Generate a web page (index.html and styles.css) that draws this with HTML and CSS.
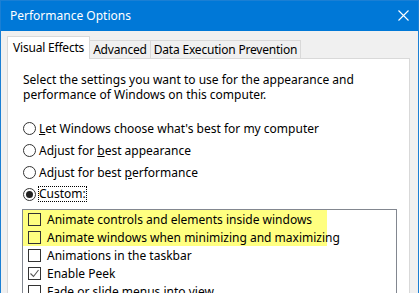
FILE: index.html
```html
<!DOCTYPE html>
<html lang="en">
<head>
    <meta charset="UTF-8">
    <title>Performance Options</title>
    <link rel="stylesheet" href="styles.css">
</head>
<body>

<section class="window">
    <div class="titlebar">
        <span class="title">Performance Options</span>
        <button class="close-btn" aria-label="Close">
            <svg width="11" height="11" viewBox="0 0 11 11">
                <path d="M0.5 0.5 L10.5 10.5 M10.5 0.5 L0.5 10.5" stroke="#fff" stroke-width="1.1" fill="none"/>
            </svg>
        </button>
    </div>

    <div class="dialog-body">
        <!-- Tabs -->
        <div class="tabs">
            <div class="tab active">Visual Effects</div>
            <div class="tab">Advanced</div>
            <div class="tab">Data Execution Prevention</div>
        </div>

        <div class="panel">
            <p class="intro">Select the settings you want to use for the appearance and performance of Windows on this computer.</p>

            <div class="radio-group">
                <label class="radio-row"><span class="radio"></span><span><u>L</u>et Windows choose what's best for my computer</span></label>
                <label class="radio-row"><span class="radio"></span><span>Adjust for <u>b</u>est appearance</span></label>
                <label class="radio-row"><span class="radio"></span><span>Adjust for best <u>p</u>erformance</span></label>
                <label class="radio-row"><span class="radio checked"></span><span class="focused">Custom:</span></label>
            </div>

            <!-- Effects list -->
            <div class="listbox">
                <div class="highlight">
                    <div class="item"><span class="checkbox"></span>Animate controls and elements inside windows</div>
                    <div class="item"><span class="checkbox"></span>Animate windows when minimizing and maximizing</div>
                </div>
                <div class="item"><span class="checkbox"></span>Animations in the taskbar</div>
                <div class="item"><span class="checkbox">
                    <svg width="11" height="11" viewBox="0 0 11 11"><path d="M1.5 5.5 L4.5 8.5 L9.5 2" stroke="#555" stroke-width="1.1" fill="none"/></svg>
                </span>Enable Peek</div>
                <div class="item"><span class="checkbox"></span>Fade or slide menus into view</div>
            </div>
        </div>
    </div>
</section>

</body>
</html>
```

FILE: styles.css
```css
/* General */
body {
    margin: 0;
    padding: 0;
    font-family: 'Noto Sans', 'Liberation Sans', sans-serif;
    font-size: 12px;
    color: #000;
    background: #f0f0f0;
}

.window {
    width: 419px;
    height: 293px;
    box-sizing: border-box;
    border: 1px solid #1a7fd4;
    border-bottom: none;
    background: #f0f0f0;
    overflow: hidden;
    display: flex;
    flex-direction: column;
}

/* Title Bar */
.titlebar {
    flex-shrink: 0;
    height: 31px;
    margin: -1px -1px 0 -1px;
    background: #0078d7;
    color: #fff;
    display: flex;
    align-items: center;
    justify-content: space-between;
    padding: 0 10px 0 10px;
}

.title {
    font-size: 12px;
}

.close-btn {
    border: none;
    background: none;
    padding: 0;
    width: 11px;
    height: 11px;
    display: flex;
}

/* Tabs */
.dialog-body {
    padding: 6px 8px 0 6px;
    flex: 1;
    min-height: 0;
    display: flex;
    flex-direction: column;
}

.tabs {
    flex-shrink: 0;
    display: flex;
    align-items: flex-end;
    height: 21px;
    position: relative;
    z-index: 1;
}

.tab {
    height: 17px;
    line-height: 17px;
    padding: 0 3px;
    border: 1px solid #d9d9d9;
    border-bottom: none;
    margin-left: -1px;
    background: #f0f0f0;
    letter-spacing: -0.2px;
}

.tab.active {
    line-height: 21px;
    margin-left: 0;
    padding: 0 5px;
    background: #fff;
    border-color: #d9d9d9;
    margin-bottom: -1px;
    height: 22px;
}

/* Tab Panel */
.panel {
    flex: 1;
    background: #fff;
    border: 1px solid #d9d9d9;
    border-bottom: none;
    padding: 13px 15px 0 15px;
    display: flex;
    flex-direction: column;
}

.intro {
    margin: 0;
    line-height: 15px;
}

.radio-group {
    margin-top: 15px;
}

.radio-row {
    display: flex;
    align-items: center;
    height: 22px;
    gap: 3px;
}

.radio {
    flex-shrink: 0;
    width: 11px;
    height: 11px;
    border: 1px solid #333;
    border-radius: 50%;
    background: #fff;
    display: flex;
    align-items: center;
    justify-content: center;
}

.radio.checked::after {
    content: "";
    width: 7px;
    height: 7px;
    border-radius: 50%;
    background: #222;
}

.focused {
    outline: 1px dotted #000;
    line-height: 14px;
}

/* List Box */
.listbox {
    margin: 4px 0 0 -1px;
    width: 373px;
    flex: 1;
    border: 1px solid #828790;
    border-bottom: none;
}

.highlight {
    width: 304px;
    background: #ffff80;
}

.item {
    display: flex;
    align-items: center;
    height: 18px;
    padding-left: 5px;
    gap: 6px;
    white-space: nowrap;
}

.checkbox {
    flex-shrink: 0;
    width: 11px;
    height: 11px;
    border: 1px solid #333;
    display: flex;
    align-items: center;
    justify-content: center;
    margin-top: 1px;
}
```
